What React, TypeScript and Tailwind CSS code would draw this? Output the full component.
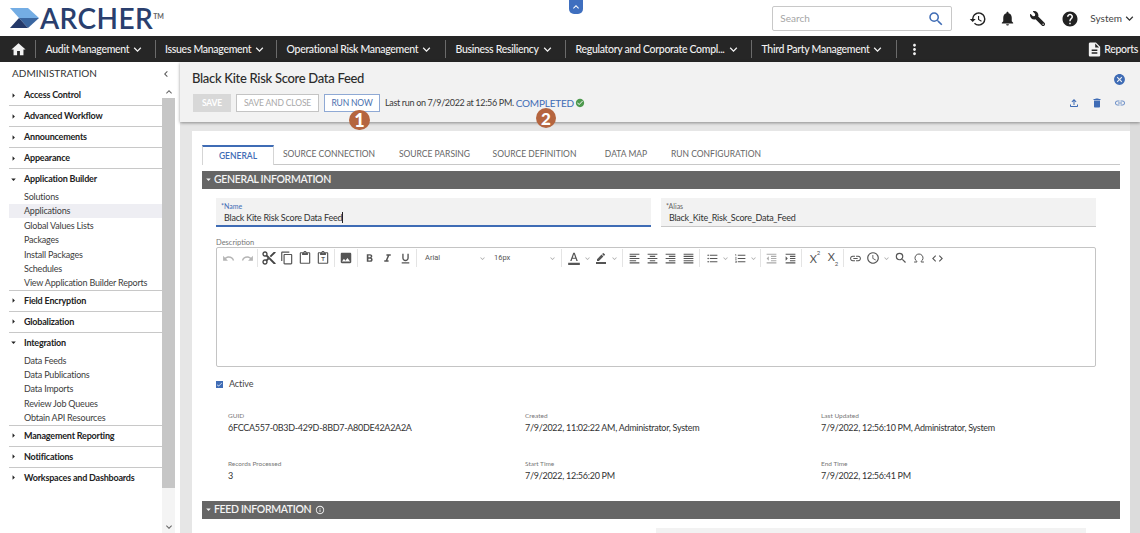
import React from "react";
import {
  MdHome, MdKeyboardArrowDown, MdKeyboardArrowUp, MdKeyboardArrowLeft, MdHistory, MdNotifications, MdHelp, MdSearch, MdMoreVert,
  MdDescription, MdCancel, MdCheckCircle, MdOutlineFileUpload, MdDelete, MdLink, MdUndo, MdRedo, MdContentCut, MdOutlineContentCopy, MdOutlineContentPaste,
  MdImage, MdFormatBold, MdFormatItalic, MdFormatUnderlined, MdFormatColorText, MdBorderColor, MdFormatAlignLeft, MdFormatAlignCenter,
  MdFormatAlignRight, MdFormatAlignJustify, MdFormatListBulleted, MdFormatListNumbered, MdFormatIndentDecrease, MdFormatIndentIncrease,
  MdAccessTime, MdCode, MdOutlineInfo, MdCheck, MdArrowDropDown, MdArrowRight,
} from "react-icons/md";
import { FaWrench } from "react-icons/fa";
import { LuOmega } from "react-icons/lu";

const font = { fontFamily: "Lato, 'Open Sans', sans-serif" };

const navItems: [string, string][] = [
  ["Audit Management", "w-[119.5px]"],
  ["Issues Management", "w-[121.5px]"],
  ["Operational Risk Management", "w-[169px]"],
  ["Business Resiliency", "w-[120px]"],
  ["Regulatory and Corporate Compl...", "w-[186px]"],
  ["Third Party Management", "w-[145px]"],
];

function NavBar() {
  return (
    <div className="flex h-[26px] items-center bg-[#262626] text-[#f2f2f2] text-[10.5px] tracking-[-0.3px] font-medium">
      <div className="w-[35px] flex justify-center pl-[1px]"><MdHome size={17} /></div>
      {navItems.map(([t, w]) => (
        <div key={t} className={`${w} h-[18px] border-l border-[#6b6b6b] flex items-center pl-[9.5px] whitespace-nowrap`}>
          <span className="pt-[1px]">{t}</span>
          <MdKeyboardArrowDown size={15} className="ml-[1px]" />
        </div>
      ))}
      <div className="h-[18px] border-l border-[#6b6b6b] flex items-center pl-[9px]"><MdMoreVert size={17} /></div>
      <div className="ml-auto flex items-center pr-[2px]">
        <MdDescription size={17} />
        <span className="ml-[1px] pt-[1px]">Reports</span>
      </div>
    </div>
  );
}

function Header() {
  return (
    <div className="relative h-[36px] bg-white flex items-center">
      <div className="flex items-center pl-[10px] w-[560px]">
        <svg width="29" height="20" viewBox="0 0 29 20">
          <polygon points="0,0 18,0 29,10 9,10" fill="#74ade4" />
          <polygon points="9,10 29,10 18,20" fill="#3a66a0" />
          <polygon points="9,10 18,20 0,20" fill="#24396a" />
        </svg>
        <span className="text-[28px] leading-none font-semibold text-[#2a3f6e] ml-[1px] tracking-[0.4px]">ARCHER</span>
        <span className="text-[7px] font-bold text-[#666] self-start mt-[7px]">TM</span>
      </div>
      <div className="absolute left-[569px] top-0 w-[14px] h-[14px] bg-[#3f6fbf] rounded-b-[5px] flex items-center justify-center text-white">
        <MdKeyboardArrowUp size={12} />
      </div>
      <div className="ml-auto flex items-center pr-[3px] mt-[1px]">
        <div className="w-[180px] h-[25px] border border-[#c8c8c8] rounded-[2px] flex items-center justify-between pl-[7px] pr-[6px] text-[10px] text-[#a5a5a5]">
          <span>Search</span>
          <MdSearch size={18} className="text-[#3f6cb5]" />
        </div>
        <MdHistory size={18} className="ml-[17px] text-[#222]" />
        <MdNotifications size={17} className="ml-[12px] text-[#222]" />
        <FaWrench size={15} className="ml-[14px] text-[#222] -scale-x-100" />
        <MdHelp size={18} className="ml-[16px] text-[#222]" />
        <span className="ml-[11px] text-[10px] text-[#444]">System</span>
        <MdKeyboardArrowDown size={15} className="text-[#333]" />
      </div>
    </div>
  );
}

const SideSection = ({ t, open, items, active }: { t: string; open?: boolean; items?: string[]; active?: string }) => (
  <div className="border-b border-[#c8c8c8] ml-[9px]">
    <div className="h-[20px] flex items-center text-[#222] text-[9px] font-bold tracking-[-0.2px]">
      <div className="w-[15px] flex justify-start">
        {open ? <MdArrowDropDown size={11} className="-ml-[1px]" /> : <MdArrowRight size={11} className="-ml-[1px]" />}
      </div>
      <span>{t}</span>
    </div>
    {items && (
      <div className="mt-[0.5px] -mb-[0.5px]">
        {items.map((i) => (
          <div key={i} className={`h-[14.4px] pl-[15px] flex items-center text-[9px] tracking-[-0.2px] text-[#3d3d3d] whitespace-nowrap ${i === active ? "bg-[#eeeef3]" : ""}`}>{i}</div>
        ))}
      </div>
    )}
  </div>
);

function Sidebar() {
  return (
    <div className="w-[175px] shrink-0 relative flex flex-col">
      <div className="h-[23px] flex items-center justify-between pl-[12px] pr-[3px] text-[10px] text-[#333]">
        <span>ADMINISTRATION</span>
        <MdKeyboardArrowLeft size={12} className="text-[#555]" />
      </div>
      <div className="flex flex-1 min-h-0">
        <div className="w-[162px] shrink-0">
          <SideSection t="Access Control" />
          <SideSection t="Advanced Workflow" />
          <SideSection t="Announcements" />
          <SideSection t="Appearance" />
          <SideSection t="Application Builder" open active="Applications" items={["Solutions", "Applications", "Global Values Lists", "Packages", "Install Packages", "Schedules", "View Application Builder Reports"]} />
          <SideSection t="Field Encryption" />
          <SideSection t="Globalization" />
          <SideSection t="Integration" open items={["Data Feeds", "Data Publications", "Data Imports", "Review Job Queues", "Obtain API Resources"]} />
          <SideSection t="Management Reporting" />
          <SideSection t="Notifications" />
          <div className="ml-[9px] h-[20px] flex items-center text-[#222] text-[9px] font-bold tracking-[-0.2px]">
            <div className="w-[15px]"><MdArrowRight size={11} className="-ml-[1px]" /></div>
            <span>Workspaces and Dashboards</span>
          </div>
        </div>
        <div className="w-[13px] flex flex-col text-[#666] bg-[#f4f4f4]">
          <div className="h-[13px] flex justify-center items-center bg-white"><MdKeyboardArrowUp size={12} /></div>
          <div className="h-[390px] bg-[#c6c6c6]" />
          <div className="flex-1 flex items-end justify-center"><MdKeyboardArrowDown size={12} /></div>
        </div>
      </div>
    </div>
  );
}

function TitleBar() {
  return (
    <div className="relative h-[60px] bg-[#f2f2f2] shadow-[0_1px_3px_rgba(0,0,0,0.4)] pl-[12px] pr-[14px] z-10 shrink-0">
      <div className="h-[32px] flex items-center justify-between pt-[2px]">
        <span className="text-[13px] tracking-[-0.3px] font-medium text-[#2b2b2b]">Black Kite Risk Score Data Feed</span>
        <MdCancel size={13} className="text-[#3f6cb5]" />
      </div>
      <div className="flex items-center h-[18px] text-[8.5px] tracking-[-0.15px]">
        <div className="w-[38px] h-[18px] ml-[1px] bg-[#d8d8d8] text-white font-bold flex items-center justify-center">SAVE</div>
        <div className="w-[83px] h-[18px] ml-[5px] bg-white border border-[#c4c4c4] text-[#a8a8a8] flex items-center justify-center">SAVE AND CLOSE</div>
        <div className="w-[56px] h-[18px] ml-[5px] bg-white border border-[#8fa9d4] text-[#4a6fae] flex items-center justify-center">RUN NOW</div>
        <span className="ml-[5px] text-[9px] tracking-[-0.33px] text-[#3a3a3a] whitespace-nowrap">Last run on 7/9/2022 at 12:56 PM.</span>
        <span className="ml-[2px] text-[10px] tracking-[-0.2px] text-[#3f6cb5] whitespace-nowrap">COMPLETED</span>
        <MdCheckCircle size={10} className="ml-[1px] text-[#4e9a4e]" />
        <div className="ml-auto flex items-center text-[#3f6cb5] gap-[11px]">
          <MdOutlineFileUpload size={12} />
          <MdDelete size={12} />
          <MdLink size={12} className="text-[#6d8fc7]" />
        </div>
      </div>
      <div className="absolute left-[169px] top-[48px] w-[21px] h-[20px] rounded-full bg-[#b5653f] text-white font-black text-[18px] leading-none flex items-center justify-center">1</div>
      <div className="absolute left-[356px] top-[46px] w-[20px] h-[20px] rounded-full bg-[#b5653f] text-white font-black text-[17px] leading-none flex items-center justify-center">2</div>
    </div>
  );
}

const Sep = ({ ml = "ml-[2px]" }: { ml?: string }) => <div className={`w-px h-[18px] bg-[#e4e4e4] ${ml}`} />;
const Car = () => <span className="w-[9px] flex justify-center"><MdKeyboardArrowDown size={9} className="text-[#aaa]" /></span>;
const Slot = ({ children, ml = "" }: { children: React.ReactNode; ml?: string }) => <span className={`w-[18px] flex justify-center shrink-0 ${ml}`}>{children}</span>;

function EditorToolbar() {
  return (
    <div className="h-[20px] flex items-center pl-[2px] text-[#555]">
      <span className="w-[19px] flex justify-center"><MdUndo size={13} className="text-[#b5b5b5]" /></span>
      <span className="w-[19px] flex justify-center"><MdRedo size={13} className="text-[#b5b5b5]" /></span>
      <Sep ml="" />
      <Slot ml="ml-[2px]"><MdContentCut size={16} className="text-[#444]" /></Slot>
      <Slot><MdOutlineContentCopy size={14} /></Slot>
      <Slot><MdOutlineContentPaste size={14} /></Slot>
      <Slot>
        <span className="relative flex justify-center">
          <MdOutlineContentPaste size={14} />
          <span className="absolute top-[4px] text-[6px] leading-[7px] font-bold">T</span>
        </span>
      </Slot>
      <Sep />
      <Slot ml="ml-[2px]"><MdImage size={14} /></Slot>
      <Sep />
      <Slot ml="ml-[2px]"><MdFormatBold size={13} /></Slot>
      <Slot><MdFormatItalic size={13} /></Slot>
      <Slot><MdFormatUnderlined size={13} /></Slot>
      <Sep />
      <span className="ml-[8px] w-[52.5px] text-[7.5px] text-[#555]" style={{ fontFamily: "Roboto, sans-serif" }}>Arial</span>
      <Car />
      <span className="ml-[7.5px] w-[54px] text-[7.5px] text-[#555]" style={{ fontFamily: "Roboto, sans-serif" }}>16px</span>
      <Car />
      <Sep ml="ml-[4px]" />
      <Slot ml="ml-[3px]"><MdFormatColorText size={14} /></Slot>
      <Car />
      <Slot><MdBorderColor size={12} /></Slot>
      <Car />
      <Sep ml="ml-[3px]" />
      <Slot ml="ml-[2px]"><MdFormatAlignLeft size={13} /></Slot>
      <Slot><MdFormatAlignCenter size={13} /></Slot>
      <Slot><MdFormatAlignRight size={13} /></Slot>
      <Slot><MdFormatAlignJustify size={13} /></Slot>
      <Sep />
      <Slot ml="ml-[3px]"><MdFormatListBulleted size={13} /></Slot>
      <Car />
      <Slot ml="ml-[1px]"><MdFormatListNumbered size={13} /></Slot>
      <Car />
      <Sep />
      <Slot ml="ml-[1px]"><MdFormatIndentDecrease size={13} className="text-[#aaa]" /></Slot>
      <Slot ml="ml-[1px]"><MdFormatIndentIncrease size={13} /></Slot>
      <Sep />
      <Slot ml="ml-[4px]"><span className="text-[11px] leading-none">X<sup className="text-[6px] align-super leading-none">2</sup></span></Slot>
      <Slot><span className="text-[11px] leading-none">X<sub className="text-[6px] align-sub leading-none">2</sub></span></Slot>
      <Sep ml="ml-[1px]" />
      <Slot ml="ml-[2px]"><MdLink size={13} /></Slot>
      <Slot><MdAccessTime size={14} /></Slot>
      <Car />
      <Slot ml="ml-[1px]"><MdSearch size={14} /></Slot>
      <Slot><LuOmega size={12} /></Slot>
      <Slot><MdCode size={13} /></Slot>
    </div>
  );
}

const Meta = ({ l, v }: { l: string; v: string }) => (
  <div>
    <div className="text-[6.5px] text-[#777] h-[9px] leading-[9px]">{l}</div>
    <div className="text-[9px] tracking-[-0.28px] text-[#333] h-[15px] leading-[15px] whitespace-nowrap">{v}</div>
  </div>
);

const tabs: [string, string][] = [
  ["SOURCE CONNECTION", "w-[110px]"],
  ["SOURCE PARSING", "w-[101px]"],
  ["SOURCE DEFINITION", "w-[99px]"],
  ["DATA MAP", "w-[84px]"],
  ["RUN CONFIGURATION", "w-[96px]"],
];

function Section({ t, info }: { t: string; info?: boolean }) {
  return (
    <div className="h-[18px] bg-[#666] flex items-center text-[#f4f4f4] text-[10.5px] font-semibold tracking-[-0.35px] pl-[1px] pb-[1px]">
      <MdArrowDropDown size={11} />
      <span>{t}</span>
      {info && <MdOutlineInfo size={10} className="ml-[4px]" />}
    </div>
  );
}

function Card() {
  return (
    <div className="bg-white w-[938px] h-[402px] mt-[9px] shrink-0 pl-[10px] pr-[10px] pt-[14px]">
      <div className="flex h-[20px] border-b border-[#c8c8c8]">
        <div className="w-[72px] h-[20px] border-t-2 border-t-[#3f6cb5] border-x border-x-[#d5d5d5] bg-white flex items-center justify-center text-[8.5px] font-semibold text-[#3f6cb5]">GENERAL</div>
        {tabs.map(([t, w]) => (
          <div key={t} className={`${w} text-[8.5px] text-[#666] flex items-center justify-center whitespace-nowrap`}>{t}</div>
        ))}
      </div>
      <div className="mt-[6px]"><Section t="GENERAL INFORMATION" /></div>
      <div className="pl-[14px] pr-[24px]">
        <div className="flex gap-[10px] mt-[9px]">
          <div className="flex-1 h-[29px] bg-[#f2f2f2] border-b-2 border-[#3f6cb5] pl-[5px] pt-[4px]">
            <div className="text-[7px] leading-[8px] text-[#3f6cb5]">*Name</div>
            <div className="text-[9px] tracking-[-0.22px] leading-[13px] text-[#333] pl-[3px] mt-[1px]">Black Kite Risk Score Data Feed<span className="border-r border-[#222]" /></div>
          </div>
          <div className="flex-1 h-[29px] bg-[#f2f2f2] border-b border-[#c8c8c8] pl-[5px] pt-[4px]">
            <div className="text-[7px] leading-[8px] text-[#666]">*Alias</div>
            <div className="text-[9px] tracking-[-0.25px] leading-[13px] text-[#333] pl-[3px] mt-[1px]">Black_Kite_Risk_Score_Data_Feed</div>
          </div>
        </div>
        <div className="text-[7.5px] leading-[9px] text-[#777] mt-[11px]">Description</div>
        <div className="h-[120px] border border-[#c4c4c4] rounded-[2px]"><EditorToolbar /></div>
        <div className="flex items-center mt-[12px] h-[10px]">
          <div className="w-[7px] h-[7px] bg-[#3f6cb5] flex items-center justify-center text-white"><MdCheck size={7} /></div>
          <span className="ml-[6px] text-[9px] tracking-[-0.1px] text-[#444]">Active</span>
        </div>
        <div className="grid grid-cols-[297px_296px_1fr] grid-rows-[48px_24px] pl-[12px] mt-[22px]">
          <Meta l="GUID" v="6FCCA557-0B3D-429D-8BD7-A80DE42A2A2A" />
          <Meta l="Created" v="7/9/2022, 11:02:22 AM, Administrator, System" />
          <Meta l="Last Updated" v="7/9/2022, 12:56:10 PM, Administrator, System" />
          <Meta l="Records Processed" v="3" />
          <Meta l="Start Time" v="7/9/2022, 12:56:20 PM" />
          <Meta l="End Time" v="7/9/2022, 12:56:41 PM" />
        </div>
      </div>
      <div className="mt-[18px]"><Section t="FEED INFORMATION" info /></div>
      <div className="ml-[454px] w-[430px] h-[6px] mt-[9px] bg-[#f2f2f2]" />
    </div>
  );
}

export default function App() {
  return (
    <div className="w-[1140px] h-[533px] overflow-hidden bg-white flex flex-col" style={font}>
      <Header />
      <NavBar />
      <div className="flex flex-1 min-h-0">
        <Sidebar />
        <div className="w-[5px] bg-white" />
        <div className="flex-1 min-w-0 bg-[#e6e6e6] flex flex-col">
          <TitleBar />
          <div className="flex flex-1 min-h-0 pl-[12px] justify-between">
            <Card />
            <div className="w-[10px] bg-[#dcdcdc]" />
          </div>
        </div>
      </div>
    </div>
  );
}
